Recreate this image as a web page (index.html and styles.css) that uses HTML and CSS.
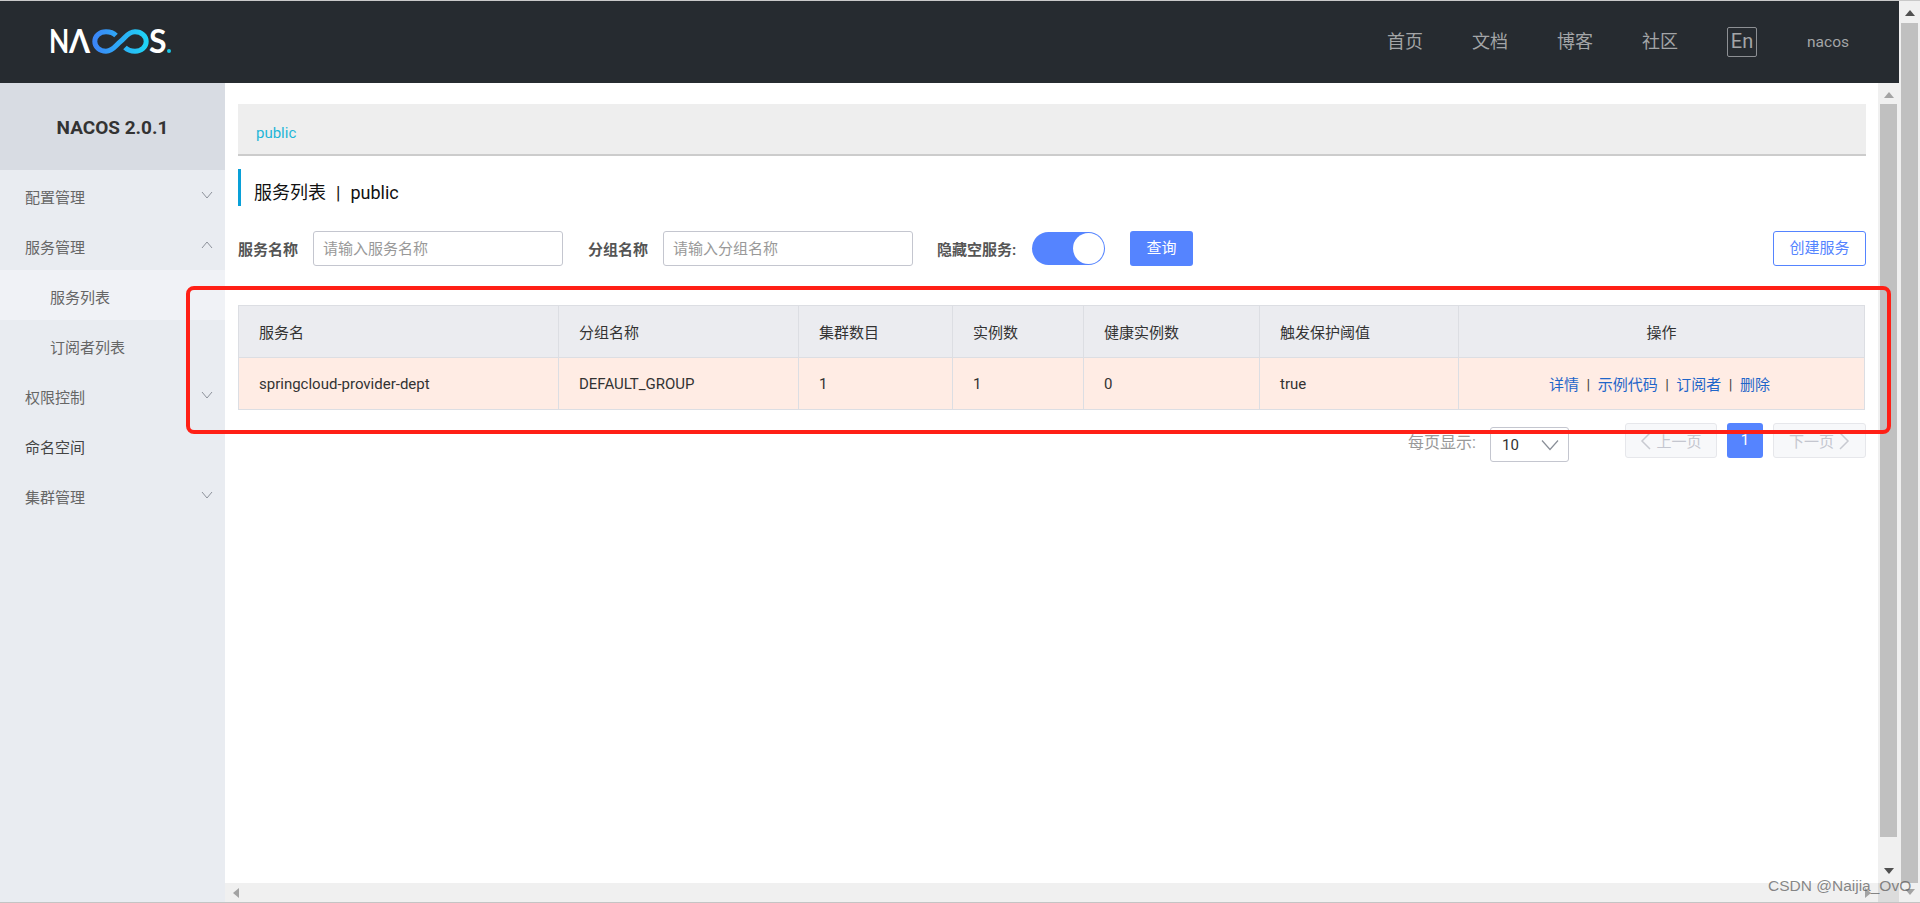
FILE: index.html
```html
<!DOCTYPE html>
<html lang="zh-CN">
<head>
<meta charset="utf-8">
<title>Nacos</title>
<link rel="stylesheet" href="styles.css">
</head>
<body>
<div class="page">
  <div class="app">
    <header class="topbar">
      <div class="logo" aria-label="NACOS">
        <span class="logo-n">N</span><span class="logo-a">Λ</span>
        <svg class="logo-loop" width="57" height="25" viewBox="0 0 57 25">
          <defs>
            <linearGradient id="loop" x1="0" y1="0" x2="1" y2="0">
              <stop offset="0" stop-color="#3b86f7"/>
              <stop offset="1" stop-color="#1fd3f5"/>
            </linearGradient>
          </defs>
          <path d="M24 6.500C21.500 4 18 2.800 14 2.800C7.500 2.800 2.800 7 2.800 12.500C2.800 18 7.500 22.200 14 22.200C21 22.200 24 16 28.500 12.500C33 9 36 2.800 43 2.800C49.500 2.800 54.200 7 54.200 12.500C54.200 18 49.500 22.200 43 22.200C39 22.200 35.500 21 33 18.500" fill="none" stroke="url(#loop)" stroke-width="5"/>
        </svg>
        <span class="logo-s">S</span><span class="logo-dot"></span>
      </div>
      <nav class="topnav">
        <a class="topnav-link">首页</a>
        <a class="topnav-link">文档</a>
        <a class="topnav-link">博客</a>
        <a class="topnav-link">社区</a>
        <span class="lang">En</span>
        <span class="user">nacos</span>
      </nav>
    </header>
    <div class="body">
      <aside class="sidebar">
        <div class="side-title">NACOS 2.0.1</div>
        <div class="side-item">配置管理<svg class="chev" width="12" height="8" viewBox="0 0 12 8"><path d="M1 1l5 6 5-6" fill="none" stroke="#8d929b" stroke-width="1"/></svg></div>
        <div class="side-item">服务管理<svg class="chev" width="12" height="8" viewBox="0 0 12 8"><path d="M1 7l5-6 5 6" fill="none" stroke="#8d929b" stroke-width="1"/></svg></div>
        <div class="side-item side-sub side-active">服务列表</div>
        <div class="side-item side-sub">订阅者列表</div>
        <div class="side-item">权限控制<svg class="chev" width="12" height="8" viewBox="0 0 12 8"><path d="M1 1l5 6 5-6" fill="none" stroke="#8d929b" stroke-width="1"/></svg></div>
        <div class="side-item side-dark">命名空间</div>
        <div class="side-item">集群管理<svg class="chev" width="12" height="8" viewBox="0 0 12 8"><path d="M1 1l5 6 5-6" fill="none" stroke="#8d929b" stroke-width="1"/></svg></div>
      </aside>
      <div class="workspace">
        <div class="work-row">
          <main class="content">
            <div class="ns-bar"><span class="ns-link">public</span></div>
            <h1 class="page-title">服务列表<span class="title-sep">|</span>public</h1>
            <form class="filters">
              <label class="f-label">服务名称</label>
              <div class="f-input f-input-a">请输入服务名称</div>
              <label class="f-label f-label-b">分组名称</label>
              <div class="f-input f-input-b">请输入分组名称</div>
              <label class="f-label f-label-c">隐藏空服务:</label>
              <div class="switch"><span class="knob"></span></div>
              <div class="btn-primary">查询</div>
              <div class="btn-outline">创建服务</div>
            </form>
            <table class="grid">
              <colgroup>
                <col class="c1"><col class="c2"><col class="c3"><col class="c4"><col class="c5"><col class="c6"><col class="c7">
              </colgroup>
              <thead>
                <tr>
                  <th>服务名</th><th>分组名称</th><th>集群数目</th><th>实例数</th><th>健康实例数</th><th>触发保护阈值</th><th class="center">操作</th>
                </tr>
              </thead>
              <tbody>
                <tr>
                  <td>springcloud-provider-dept</td><td>DEFAULT_GROUP</td><td>1</td><td>1</td><td>0</td><td>true</td>
                  <td class="center ops"><a class="op">详情</a><span class="pipe">|</span><a class="op">示例代码</a><span class="pipe">|</span><a class="op">订阅者</a><span class="pipe">|</span><a class="op">删除</a></td>
                </tr>
              </tbody>
            </table>
            <div class="pager">
              <span class="pager-label">每页显示:</span>
              <div class="pager-select"><span>10</span><svg width="20" height="12" viewBox="0 0 20 12"><path d="M2 1.500l8 9 8-9" fill="none" stroke="#8a8f98" stroke-width="1.200"/></svg></div>
              <div class="pg-btn pg-prev"><svg width="11" height="18" viewBox="0 0 11 18"><path d="M10 1L2 9l8 8" fill="none" stroke="#c8cad1" stroke-width="1.500"/></svg>上一页</div>
              <div class="pg-num">1</div>
              <div class="pg-btn pg-next">下一页<svg width="11" height="18" viewBox="0 0 11 18"><path d="M1 1l8 8-8 8" fill="none" stroke="#c8cad1" stroke-width="1.500"/></svg></div>
            </div>
          </main>
          <div class="vbar">
            <span class="tri tri-up tri-light"></span>
            <div class="vbar-thumb"></div>
            <span class="tri tri-down tri-dark"></span>
          </div>
        </div>
        <div class="hbar">
          <span class="tri tri-left"></span>
          <span class="tri tri-right"></span>
          <span class="hbar-corner"></span>
        </div>
      </div>
    </div>
  </div>
  <div class="outer-bar">
    <span class="tri tri-up tri-dark outer-up"></span>
    <div class="outer-thumb"></div>
    <span class="tri tri-down tri-light outer-down"></span>
  </div>
  <div class="red-frame"></div>
  <div class="watermark">CSDN @Naijia_OvO</div>
</div>
</body>
</html>
```
FILE: styles.css
```css
* { box-sizing: border-box; }
html, body { margin: 0; height: 100%; overflow: hidden; }
body { font-family: Roboto, "Noto Sans CJK SC", sans-serif; font-size: 15px; color: #333; background: #fff; }

.page { position: relative; width: 1920px; height: 903px; display: flex; border-top: 1px solid #c9c9c9; border-bottom: 1px solid #c4c4c4; }
.app { width: 1899px; display: flex; flex-direction: column; }

.topbar { height: 82px; flex: none; background: #262b30; display: flex; align-items: center; justify-content: space-between; padding: 0 50px 0 49px; }
.logo { display: flex; align-items: center; color: #fff; font-family: Lato, sans-serif; font-weight: 700; font-size: 32px; line-height: 30px; margin-top: -2px; }
.logo-n { width: 20px; display: block; transform: scaleX(0.82); transform-origin: left center; }
.logo-a { width: 23px; display: block; transform: scaleX(0.95); transform-origin: left center; }
.logo-s { width: 17px; }
.logo-dot { width: 4px; height: 4px; border-radius: 50%; background: #19c8e8; margin: 20px 0 0 1px; }

.topnav { display: flex; align-items: center; }
.topnav-link { font-size: 18px; line-height: 24px; color: #a3a5a7; margin-right: 49px; }
.lang { width: 30px; height: 30px; border: 1px solid #8d9094; border-radius: 2px; color: #a3a5a7; font-size: 20px; line-height: 26px; text-align: center; margin-right: 50px; }
.user { font-size: 15.500px; color: #a3a5a7; }

.body { flex: 1; display: flex; min-height: 0; }
.sidebar { width: 225px; flex: none; background: #e9ecf1; }
.side-title { height: 87px; padding-top: 2px; background: #d8dce3; display: flex; align-items: center; justify-content: center; font-size: 19px; font-weight: 700; color: #333; }
.side-item { position: relative; height: 50px; display: flex; align-items: center; padding: 3px 0 0 25px; color: #666; font-size: 15px; }
.side-sub { padding-left: 50px; }
.side-active { background: #f0f2f6; }
.side-dark { color: #444; }
.chev { position: absolute; right: 12px; top: 21px; }

.workspace { flex: 1; display: flex; flex-direction: column; min-width: 0; }
.work-row { flex: 1; display: flex; min-height: 0; }
.content { flex: 1; min-width: 0; padding: 21px 12px 0 13px; }

.ns-bar { height: 52px; background: #eee; border-bottom: 2px solid #ccc; padding: 18px 18px 0; line-height: 22px; }
.ns-link { color: #1fb6d8; font-size: 15px; }

.page-title { height: 37px; margin: 13px 0 0; border-left: 3px solid #09a0d8; padding: 5px 0 0 13px; font-size: 18px; font-weight: 400; line-height: 37px; color: #111; }
.title-sep { margin: 0 10px; }

.filters { display: flex; align-items: center; height: 35px; margin-top: 25px; }
.f-label { font-size: 15px; font-weight: 700; color: #555; width: 60px; flex: none; white-space: nowrap; padding-bottom: 1px; }
.f-label-b { margin-left: 25px; }
.f-label-c { margin-left: 24px; width: 80px; }
.f-input { height: 35px; border: 1px solid #c4c6cf; border-radius: 3px; padding-left: 9px; color: #999; line-height: 35px; font-size: 15px; flex: none; margin-left: 15px; }
.f-input-a { width: 250px; }
.f-input-b { width: 250px; }
.switch { width: 73px; height: 33px; margin-left: 15px; border-radius: 17px; background: #5584ff; flex: none; display: flex; justify-content: flex-end; padding: 1px; }
.knob { width: 31px; height: 31px; border-radius: 50%; background: #fff; }
.btn-primary { width: 63px; height: 35px; margin-left: 25px; background: #5584ff; color: #fff; border-radius: 3px; text-align: center; line-height: 35px; }
.btn-outline { width: 93px; height: 35px; margin-left: auto; border: 1px solid #5584ff; color: #5584ff; border-radius: 3px; text-align: center; line-height: 33px; }

.grid { width: 1626px; margin-top: 39px; border-collapse: collapse; table-layout: fixed; font-size: 15px; }
.c1 { width: 320px; }
.c2 { width: 240px; }
.c3 { width: 154px; }
.c4 { width: 131px; }
.c5 { width: 176px; }
.c6 { width: 199px; }
.c7 { width: 406px; }
.grid th, .grid td { border: 1px solid #dcdee3; padding: 0 20px; text-align: left; font-weight: 400; white-space: nowrap; color: #333; }
.grid th { height: 52px; background: #ebecf0; }
.grid td { height: 52px; background: #ffece4; }
.grid .center { text-align: center; }
.grid .ops { padding-right: 24px; }
.op { color: #1f66c9; }
.pipe { margin: 0 7.500px; color: #444; }

.pager { display: flex; align-items: flex-start; margin-top: 13px; justify-content: flex-end; }
.pager-label { color: #999; font-size: 16px; line-height: 26px; margin-top: 7px; }
.pager-select { width: 79px; height: 35px; margin: 4px 56px 0 14px; border: 1px solid #c4c6cf; border-radius: 3px; display: flex; align-items: center; justify-content: space-between; padding: 0 8px 0 11px; font-size: 15px; color: #333; }
.pg-btn { width: 92px; height: 35px; background: #f7f8fa; border: 1px solid #e6e7eb; border-radius: 3px; color: #c4c6cf; display: flex; align-items: center; justify-content: center; gap: 5px; }
.pg-next { width: 93px; }
.pg-num { width: 36px; height: 35px; margin: 0 10px; background: #5584ff; color: #fff; border-radius: 3px; text-align: center; line-height: 35px; }

.vbar { width: 21px; flex: none; background: #f0f0f0; display: flex; flex-direction: column; align-items: center; }
.vbar-thumb { width: 17px; height: 733px; background: #c0c0c0; margin-top: 6px; }
.vbar .tri-up { margin-top: 9px; }
.vbar .tri-down { margin-top: 31px; }

.hbar { height: 19px; flex: none; background: #f0f0f0; display: flex; align-items: center; padding-left: 8px; }
.hbar-corner { width: 21px; height: 19px; background: #dcdcdc; margin-left: 7px; }
.hbar .tri-right { margin-left: auto; }

.tri { width: 0; height: 0; display: block; flex: none; }
.tri-up { border-left: 5px solid transparent; border-right: 5px solid transparent; border-bottom: 6px solid #505050; }
.tri-down { border-left: 5px solid transparent; border-right: 5px solid transparent; border-top: 6px solid #505050; }
.tri-light.tri-up { border-bottom-color: #a3a3a3; }
.tri-light.tri-down { border-top-color: #a3a3a3; }
.tri-left { border-top: 5px solid transparent; border-bottom: 5px solid transparent; border-right: 6px solid #a3a3a3; }
.tri-right { border-top: 5px solid transparent; border-bottom: 5px solid transparent; border-left: 6px solid #a3a3a3; }

.outer-bar { width: 21px; flex: none; background: #f0f0f0; display: flex; flex-direction: column; align-items: center; }
.outer-up { margin-top: 9px; }
.outer-thumb { width: 17px; height: 860px; margin-top: 7px; background: #c0c0c0; }
.outer-down { margin-top: 6px; }

.red-frame { position: absolute; left: 186px; top: 285px; width: 1705px; height: 148px; border: 4px solid #ff2016; border-radius: 8px; }
.watermark { position: absolute; left: 1768px; top: 875px; font-family: "Liberation Sans", sans-serif; font-size: 15.500px; line-height: 20px; color: rgba(90, 90, 90, 0.72); white-space: nowrap; }
```
